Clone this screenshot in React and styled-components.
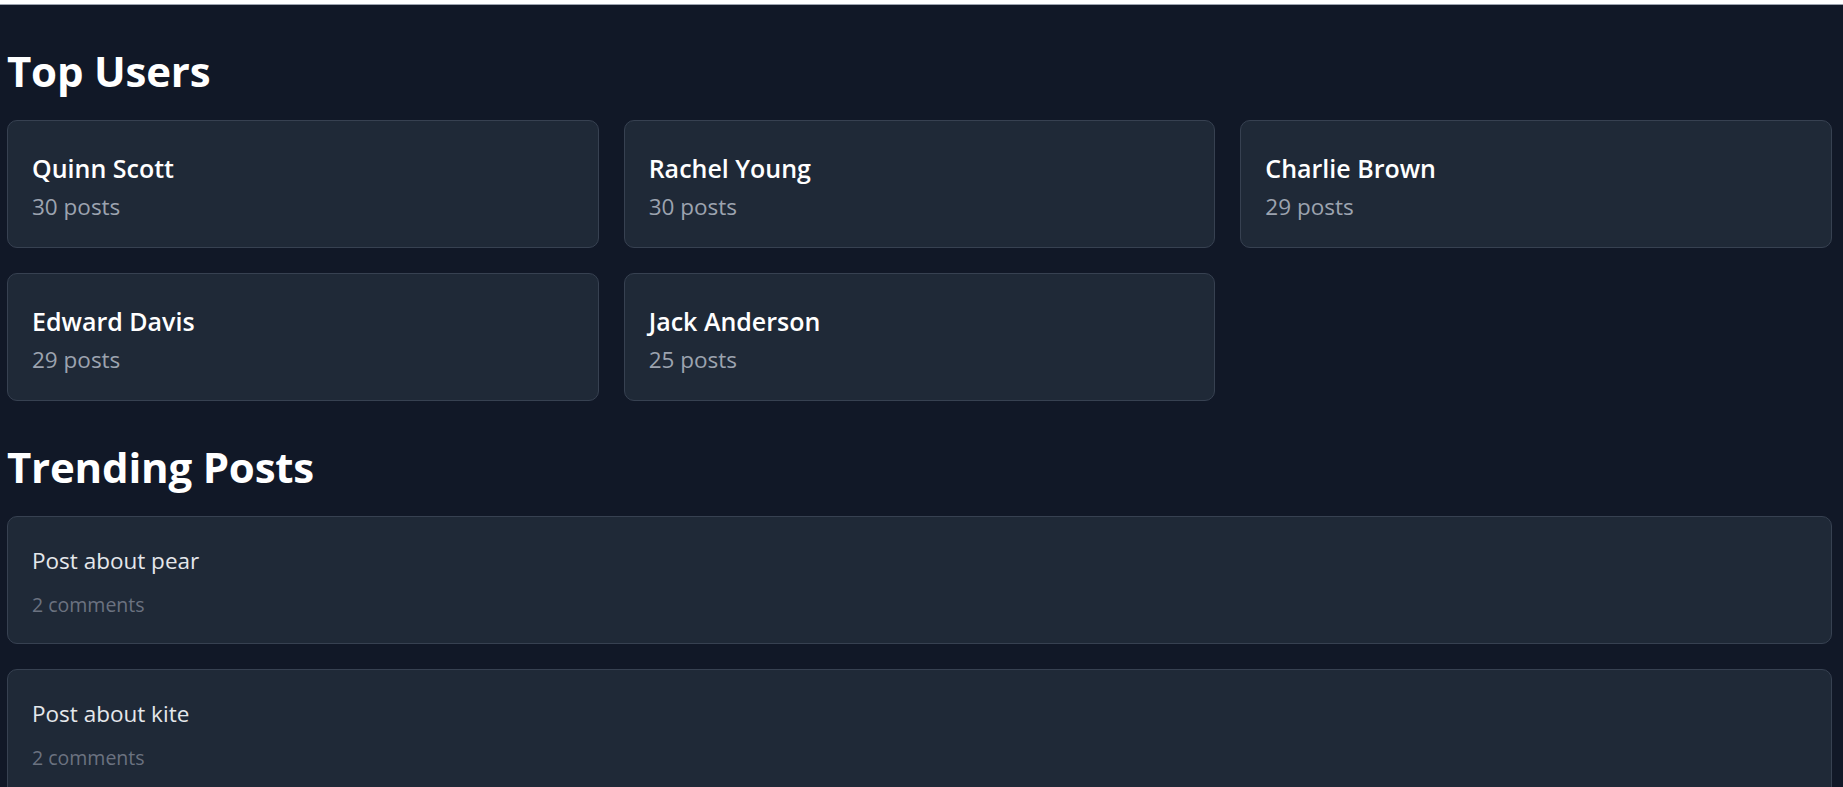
import React from 'react';
import styled, { createGlobalStyle } from 'styled-components';

const colors = {
  page: '#111827',
  card: '#1f2937',
  border: '#374151',
  white: '#ffffff',
  title: '#e5e7eb',
  muted: '#9ca3af',
  faint: '#6b7280',
};

const GlobalStyle = createGlobalStyle`
  html, body {
    margin: 0;
    padding: 0;
    background: ${colors.page};
  }
  body {
    font-family: "Open Sans", "Noto Sans", Arial, sans-serif;
    color: ${colors.white};
  }
  * {
    box-sizing: border-box;
  }
`;

const TopStrip = styled.div`
  height: 5px;
  background: #ffffff;
  border-bottom: 1px solid #9ca3af;
`;

const StyledPage = styled.main`
  min-height: 782px;
  padding: 0 11px 40px 7px;
  background: ${colors.page};
`;

const StyledHeading = styled.h2`
  margin: 41px 0 24px;
  font-size: 42px;
  line-height: 50px;
  font-weight: 700;
  color: ${colors.white};
  letter-spacing: -0.2px;
`;

const StyledGrid = styled.div`
  display: grid;
  grid-template-columns: repeat(${props => props.columns}, 1fr);
  gap: 25px;
`;

const StyledCard = styled.div`
  background: ${colors.card};
  border: 1px solid ${colors.border};
  border-radius: 10px;
  padding: ${props => (props.post ? '27px 24px 24px' : '29px 24px 24px')};
  min-height: 128px;
`;

const StyledName = styled.h3`
  margin: 0 0 3px;
  font-size: 25px;
  line-height: 37px;
  font-weight: 600;
  color: ${colors.white};
`;

const StyledCount = styled.p`
  margin: 0;
  font-size: 22.5px;
  line-height: 33px;
  color: ${colors.muted};
`;

const StyledPostTitle = styled.p`
  margin: 0 0 13px;
  font-size: 22.5px;
  line-height: 34px;
  color: ${colors.title};
`;

const StyledComments = styled.p`
  margin: 0;
  font-size: 19.5px;
  line-height: 28px;
  color: ${colors.faint};
`;

const users = [
  { name: 'Quinn Scott', posts: 30 },
  { name: 'Rachel Young', posts: 30 },
  { name: 'Charlie Brown', posts: 29 },
  { name: 'Edward Davis', posts: 29 },
  { name: 'Jack Anderson', posts: 25 },
];

const posts = [
  { title: 'Post about pear', comments: 2 },
  { title: 'Post about kite', comments: 2 },
  { title: 'Post about lemon', comments: 1 },
];

const App = () => (
  <>
    <GlobalStyle />
    <TopStrip />
    <StyledPage>
      <StyledHeading>Top Users</StyledHeading>
      <StyledGrid columns={3}>
        {users.map(user => (
          <StyledCard key={user.name}>
            <StyledName>{user.name}</StyledName>
            <StyledCount>{user.posts} posts</StyledCount>
          </StyledCard>
        ))}
      </StyledGrid>

      <StyledHeading>Trending Posts</StyledHeading>
      <StyledGrid columns={1}>
        {posts.map(post => (
          <StyledCard post key={post.title}>
            <StyledPostTitle>{post.title}</StyledPostTitle>
            <StyledComments>{post.comments} comments</StyledComments>
          </StyledCard>
        ))}
      </StyledGrid>
    </StyledPage>
  </>
);

export default App;
